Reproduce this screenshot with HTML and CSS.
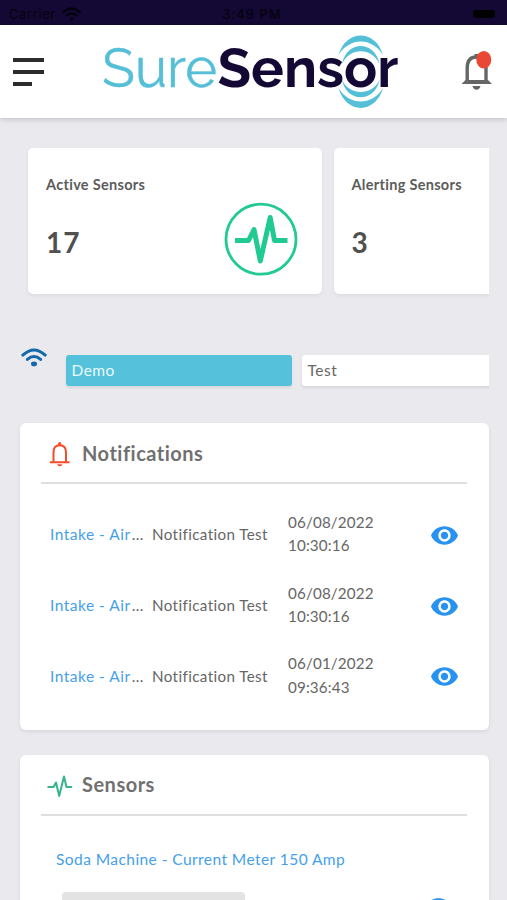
FILE: index.html
```html
<!DOCTYPE html>
<html lang="en">
<head>
<meta charset="utf-8">
<title>SureSensor</title>
<link rel="stylesheet" href="styles.css">
</head>
<body>
<svg class="defs" width="0" height="0" aria-hidden="true">
  <symbol id="eye" viewBox="1 4.5 22 15"><path d="M12 4.5C7 4.5 2.73 7.61 1 12c1.73 4.39 6 7.5 11 7.5s9.27-3.11 11-7.5c-1.73-4.39-6-7.5-11-7.5zM12 17c-2.76 0-5-2.24-5-5s2.24-5 5-5 5 2.24 5 5-2.24 5-5 5zm0-8c-1.66 0-3 1.34-3 3s1.34 3 3 3 3-1.34 3-3-1.34-3-3-3z"/></symbol>
  <symbol id="wifi" viewBox="0 0 26 19"><path d="M1.8 7.1Q13-3.2 24.2 7.1M6.4 11.4Q13 5.6 19.6 11.4" fill="none" stroke="currentColor" stroke-width="3" stroke-linecap="round"/><ellipse cx="13" cy="15.9" rx="3" ry="2.4" fill="currentColor"/></symbol>
</svg>
<div class="status">
  <div class="carrier"><span>Carrier</span><svg width="19" height="14"><use href="#wifi"/></svg></div>
  <span class="clock">3:49 PM</span>
  <span class="battery"></span>
</div>
<header class="header">
  <div class="menu"><i></i><i></i><i></i></div>
  <svg class="logo" width="298" height="78" viewBox="102 33 298 78">
    <g fill="#55bfd7">
      <path d="M338.500 55C346 29 375.500 29 383 55C372 37 349.500 37 338.500 55Z"/>
      <path d="M342 64C346.500 40 375 40 379.500 64C372 47 349.500 47 342 64Z"/>
      <path d="M338.500 88C346 114.500 375.500 114.500 383 88C372 106 349.500 106 338.500 88Z"/>
      <path d="M342 80C346.500 103 375 103 379.500 80C372 96 349.500 96 342 80Z"/>
    </g>
    <text class="logo-thin" x="102" y="87" textLength="115" lengthAdjust="spacingAndGlyphs">Sure</text>
    <text class="logo-bold" x="217.500" y="87" textLength="181" lengthAdjust="spacingAndGlyphs">Sensor</text>
  </svg>
  <svg class="bell" width="32" height="42" viewBox="460 49 32 42">
    <path d="M467.200 82V68C467.200 60 471 57 476.500 57S486 60 486 68V82" fill="none" stroke="#666" stroke-width="3.400"/>
    <path d="M474.500 56v-2h4v2zM461.500 84l4-4h22.500l4 4zM472.500 86h8q-1 3.800-4 3.800t-4-3.800z" fill="#666"/>
    <ellipse cx="483.800" cy="59.800" rx="7.500" ry="8.800" fill="#ea4634"/>
  </svg>
</header>
<main>
  <section class="stats">
    <article class="stat">
      <h3>Active Sensors</h3>
      <strong>17</strong>
      <svg class="pulse" width="74" height="74" viewBox="224 202 74 74" fill="none" stroke="#20ca91">
        <circle cx="261" cy="239.200" r="35" stroke-width="2.800"/>
        <path d="M235 240.500H248.500L254 229.500L260.300 261L270.200 217.500L274.500 240.500H287.500" stroke-width="5" stroke-linejoin="round"/>
      </svg>
    </article>
    <article class="stat">
      <h3>Alerting Sensors</h3>
      <strong>3</strong>
    </article>
  </section>
  <section class="sites">
    <svg class="sites-icon" width="26" height="19"><use href="#wifi"/></svg>
    <div class="tabs"><div class="tab active">Demo</div><div class="tab">Test</div></div>
  </section>
  <section class="panel notifications">
    <div class="panel-head">
      <svg width="24" height="26" viewBox="48 442 24 26"><path d="M53.500 463V453.500C53.500 448 56 446.200 59.700 446.200S66 448 66 453.500V463M49.800 463.300H69.600" fill="none" stroke="#f34d2c" stroke-width="2"/><path d="M58 446q0-3 1.700-3t1.700 3zM57 465.200h5.500q-.700 2-2.750 2t-2.750-2z" fill="#f34d2c"/></svg>
      <h2>Notifications</h2>
    </div>
    <div class="row"><span class="name"><a>Intake - Air</a>…</span><span class="kind">Notification Test</span><time>06/08/2022<br>10:30:16</time><svg class="eye" width="27" height="19"><use href="#eye"/></svg></div>
    <div class="row"><span class="name"><a>Intake - Air</a>…</span><span class="kind">Notification Test</span><time>06/08/2022<br>10:30:16</time><svg class="eye" width="27" height="19"><use href="#eye"/></svg></div>
    <div class="row"><span class="name"><a>Intake - Air</a>…</span><span class="kind">Notification Test</span><time>06/01/2022<br>09:36:43</time><svg class="eye" width="27" height="19"><use href="#eye"/></svg></div>
  </section>
  <section class="panel sensors">
    <div class="panel-head">
      <svg width="26" height="24" viewBox="47 774 26 24"><path d="M47.500 787H53.500L56 782.500L59.200 796L64 776.500L66.500 787H72" fill="none" stroke="#35b58c" stroke-width="2" stroke-linejoin="round"/></svg>
      <h2>Sensors</h2>
    </div>
    <a class="sensor-name">Soda Machine - Current Meter 150 Amp</a>
    <div class="sensor-row"><span class="reading"></span><svg class="eye" width="27" height="19"><use href="#eye"/></svg></div>
  </section>
</main>
</body>
</html>
```
FILE: styles.css
```css
* { box-sizing: border-box; }
body { margin: 0; height: 900px; overflow: hidden; background: #e9e9ee; font-family: Lato, "Liberation Sans", sans-serif; color: #666; }
h2, h3 { margin: 0; }
.defs { position: absolute; }
.status { height: 25px; background: #130934; color: #05020d; display: grid; grid-template-columns: 1fr auto 1fr; align-items: center; padding: 2px 12px 0 9px; font: 13px Inter, sans-serif; }
.carrier { display: flex; align-items: center; gap: 6px; letter-spacing: .6px; }
.clock { font-weight: 500; letter-spacing: 1px; }
.battery { justify-self: end; width: 22px; height: 8px; border-radius: 3px; background: #000; }
.header { height: 93px; background: #fff; box-shadow: 0 2px 5px rgba(0,0,0,.14); display: flex; align-items: flex-start; padding: 8px 15px 0 13px; }
.menu { width: 31px; display: grid; gap: 8px; margin-top: 25px; }
.menu i { height: 4px; background: #2c2c2c; }
.menu i:last-child { width: 19px; }
.logo { margin-left: 58px; }
.logo text { font-family: Raleway, Lato, sans-serif; font-size: 54px; }
.logo-thin { fill: #55bfd7; font-weight: 400; stroke: #55bfd7; stroke-width: .4px; }
.logo-bold { fill: #130934; font-weight: 700; }
.bell { margin: 16px 0 0 auto; }
.stats { display: flex; gap: 12px; margin: 20px 18px 0 18px; padding: 10px 0 10px 10px; overflow: hidden; }
.stat { position: relative; flex: 0 0 293.500px; height: 146px; padding: 27px 18px; background: #fff; border-radius: 5px; box-shadow: 0 2px 4px rgba(0,0,0,.06); }
.stat h3 { font-size: 14.500px; line-height: 20px; font-weight: 700; color: #5c5c5c; white-space: nowrap; letter-spacing: .3px; }
.stat strong { display: block; margin-top: 30px; font-size: 28px; line-height: 34px; color: #505050; letter-spacing: 1px; }
.pulse { position: absolute; right: 24px; top: 54px; }
.sites { display: flex; margin: 44px 18px 0 21px; height: 48px; }
.sites-icon { color: #1268aa; }
.tabs { display: flex; gap: 10px; flex: 1; overflow: hidden; margin-left: 16px; padding: 7px 0 0 2.500px; }
.tab { flex: 0 0 226px; height: 31px; padding: 0 6px; border-radius: 3px; background: #fff; box-shadow: 0 2px 3px rgba(0,0,0,.08); font-size: 15.500px; line-height: 31px; letter-spacing: .5px; }
.tab.active { background: #55c1da; color: #e9fbff; }
.panel { margin: 0 18.500px 0 19.500px; padding: 0 21.500px; background: #fff; border-radius: 6px; box-shadow: 0 2px 4px rgba(0,0,0,.07); }
.notifications { height: 307px; margin-top: 27px; }
.panel-head { height: 61px; display: flex; align-items: center; border-bottom: 2px solid #dfdfdf; padding: 2px 0 0 6px; gap: 9px; }
.panel-head svg { flex: 0 0 26px; }
.panel-head h2 { font-size: 20px; line-height: 28px; margin-top: -2px; letter-spacing: .5px; color: #707070; }
.notifications .panel-head { margin-bottom: 15px; padding-top: 3px; }
.sensors .panel-head h2 { margin-top: -3px; }
.row { height: 70.800px; display: grid; grid-template-columns: 102px 136px 143px 28px; align-items: center; padding-left: 9px; font-size: 15.200px; white-space: nowrap; }
.row .name { letter-spacing: .5px; }
.row .name a { margin-right: 1px; }
.row .name { font-size: 15.500px; }
.row .kind { letter-spacing: .38px; }
.row time { line-height: 23.500px; letter-spacing: .15px; }
.row .eye { margin-top: 2px; }
a { color: #459fec; }
.eye { fill: #2792ef; }
.sensors { height: 145px; margin-top: 25px; border-radius: 6px 6px 0 0; overflow: hidden; }
.sensor-name { display: block; margin: 32px 0 0 15px; font-size: 15.500px; line-height: 22px; white-space: nowrap; letter-spacing: .44px; }
.sensor-row { display: flex; justify-content: space-between; align-items: flex-start; margin: 22px 15px 0 21px; height: 8px; overflow: hidden; }
.reading { width: 183px; height: 38px; border-radius: 4px; background: #e3e3e3; }
.sensor-row .eye { margin-top: 6px; }
```
